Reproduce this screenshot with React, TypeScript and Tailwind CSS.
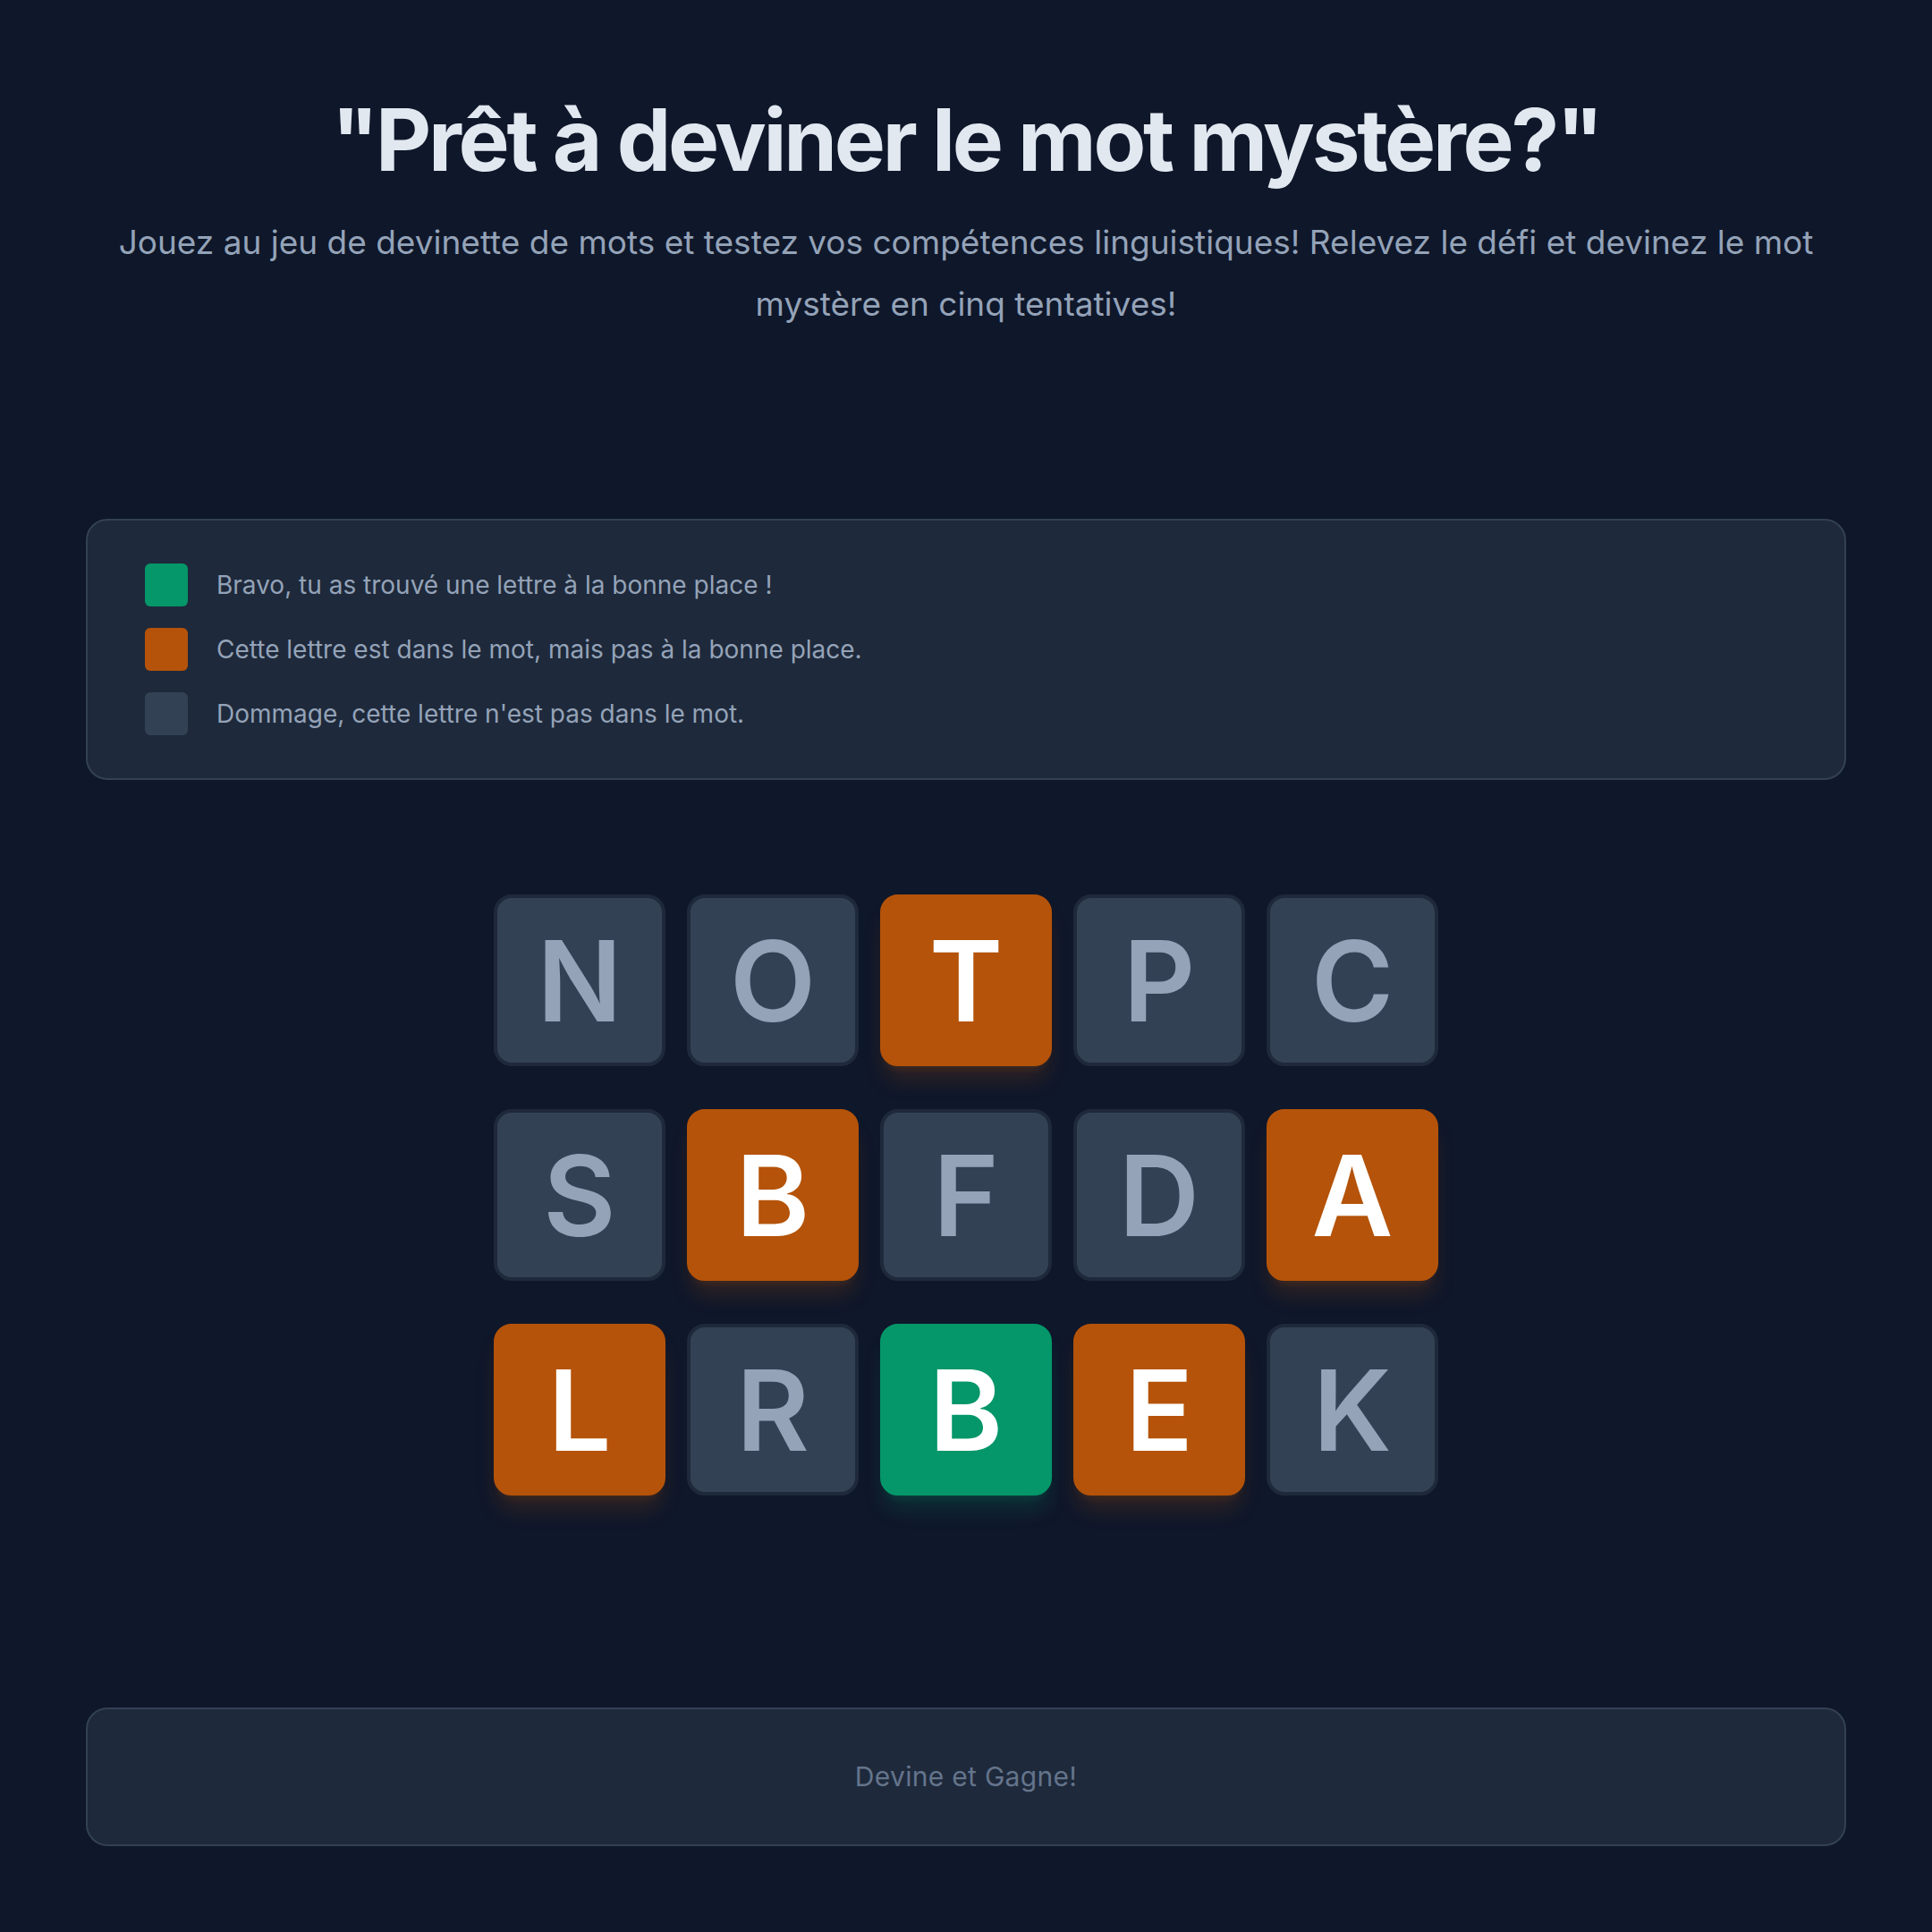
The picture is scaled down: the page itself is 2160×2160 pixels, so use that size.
const ROWS = [
  ["N", "O", "T", "P", "C"],
  ["S", "B", "F", "D", "A"],
  ["L", "R", "B", "E", "K"],
];

// 0 = absent, 1 = misplaced, 2 = correct
const STATES = [
  [0, 0, 1, 0, 0],
  [0, 1, 0, 0, 1],
  [1, 0, 2, 1, 0],
];

const LEGEND = [
  { color: "bg-[#059669]", text: "Bravo, tu as trouvé une lettre à la bonne place !" },
  { color: "bg-[#b45309]", text: "Cette lettre est dans le mot, mais pas à la bonne place." },
  { color: "bg-[#334155]", text: "Dommage, cette lettre n'est pas dans le mot." },
];

function tileClass(state: number) {
  if (state === 2) return "border-[#059669] bg-[#059669] text-white shadow-xl shadow-[#059669]/20";
  if (state === 1) return "border-[#b45309] bg-[#b45309] text-white shadow-xl shadow-[#b45309]/20";
  return "border-[#1e293b] bg-[#334155] text-[#94a3b8]";
}

export default function App() {
  return (
    <div className="min-h-screen bg-[#0f172a] px-24 pb-24 font-['Inter',sans-serif]">
      <header className="pt-[108px] text-center">
        <h1 className="text-8xl font-bold leading-none tracking-[-0.034em] text-[#e2e8f0]">
          "Prêt à deviner le mot mystère?"
        </h1>
        <p className="mt-8 text-[37px] leading-[69px] text-[#94a3b8]">
          Jouez au jeu de devinette de mots et testez vos compétences linguistiques! Relevez le défi et devinez le mot mystère en cinq tentatives!
        </p>
      </header>

      <section className="mt-[206px] rounded-3xl border-2 border-[#334155] bg-[#1e293b] px-16 py-12">
        <ul className="space-y-6">
          {LEGEND.map((item) => (
            <li key={item.text} className="flex items-center gap-8">
              <span className={`h-12 w-12 shrink-0 rounded-md ${item.color}`} />
              <span className="text-[28px] text-[#94a3b8]">{item.text}</span>
            </li>
          ))}
        </ul>
      </section>

      <div className="mt-32 flex flex-col items-center gap-12">
        {ROWS.map((row, r) => (
          <div key={r} className="flex gap-6">
            {row.map((letter, c) => (
              <div
                key={c}
                className={`flex h-48 w-48 items-center justify-center rounded-[20px] border-4 text-[125px] font-semibold leading-none ${tileClass(STATES[r][c])}`}
              >
                {letter}
              </div>
            ))}
          </div>
        ))}
      </div>

      <footer className="mt-[237px] flex h-[155px] items-center justify-center rounded-3xl border-2 border-[#334155] bg-[#1e293b]">
        <span className="text-[30px] tracking-[0.01em] text-[#64748b]">Devine et Gagne!</span>
      </footer>
    </div>
  );
}
